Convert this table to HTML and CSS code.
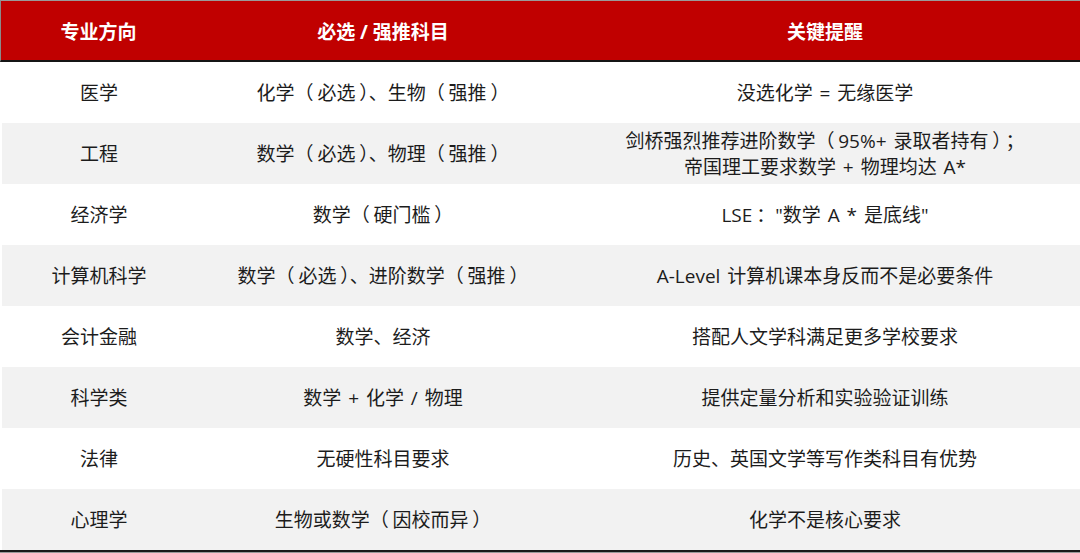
FILE: index.html
```html
<!DOCTYPE html>
<html lang="zh-CN">
<head>
<meta charset="utf-8">
<title>专业方向与选科</title>
<link rel="stylesheet" href="styles.css">
</head>
<body>
<div class="table">
  <div class="row head">
    <div class="cell">专业方向</div>
    <div class="cell">必选 / 强推科目</div>
    <div class="cell">关键提醒</div>
  </div>
  <div class="row">
    <div class="cell">医学</div>
    <div class="cell"><span>化学<span class="po">（</span>必选<span class="pc">）</span>、生物<span class="po">（</span>强推<span class="pc">）</span></span></div>
    <div class="cell">没选化学 = 无缘医学</div>
  </div>
  <div class="row alt">
    <div class="cell">工程</div>
    <div class="cell"><span>数学<span class="po">（</span>必选<span class="pc">）</span>、物理<span class="po">（</span>强推<span class="pc">）</span></span></div>
    <div class="cell"><span>剑桥强烈推荐进阶数学<span class="po">（</span>95%+ 录取者持有<span class="pc">）</span><span class="pc">；</span><br>帝国理工要求数学 + 物理均达 A*</span></div>
  </div>
  <div class="row">
    <div class="cell">经济学</div>
    <div class="cell"><span>数学<span class="po">（</span>硬门槛<span class="pc">）</span></span></div>
    <div class="cell"><span>LSE<span class="pc">：</span>"数学 A * 是底线"</span></div>
  </div>
  <div class="row alt">
    <div class="cell">计算机科学</div>
    <div class="cell"><span>数学<span class="po">（</span>必选<span class="pc">）</span>、进阶数学<span class="po">（</span>强推<span class="pc">）</span></span></div>
    <div class="cell">A-Level 计算机课本身反而不是必要条件</div>
  </div>
  <div class="row">
    <div class="cell">会计金融</div>
    <div class="cell">数学、经济</div>
    <div class="cell">搭配人文学科满足更多学校要求</div>
  </div>
  <div class="row alt">
    <div class="cell">科学类</div>
    <div class="cell">数学 + 化学 / 物理</div>
    <div class="cell">提供定量分析和实验验证训练</div>
  </div>
  <div class="row">
    <div class="cell">法律</div>
    <div class="cell">无硬性科目要求</div>
    <div class="cell">历史、英国文学等写作类科目有优势</div>
  </div>
  <div class="row alt">
    <div class="cell">心理学</div>
    <div class="cell"><span>生物或数学<span class="po">（</span>因校而异<span class="pc">）</span></span></div>
    <div class="cell">化学不是核心要求</div>
  </div>
</div>
</body>
</html>
```

FILE: styles.css
```css
html, body {
  margin: 0;
  padding: 0;
  background: #ffffff;
}

body {
  width: 1080px;
  height: 553px;
  overflow: hidden;
  font-family: "Open Sans", "Noto Sans CJK SC", sans-serif;
  font-size: 19px;
  color: #1c1c1c;
}

.table {
  display: flex;
  flex-direction: column;
  border-bottom: 2px solid #1a1a1a;
  box-shadow: 0 1px 0 #9a9a9a;
}

.row {
  display: grid;
  grid-template-columns: 194px 374px 510px;
  height: 61px;
  border-left: 2px solid #ffffff;
}

.row.alt {
  background: #f2f2f2;
}

.row.head {
  height: 59px;
  background: #c00000;
  color: #ffffff;
  font-weight: 700;
  border-top: 1px solid #9a9a9a;
  border-left: 1px solid #8a8a8a;
  border-bottom: 2px solid #151515;
  grid-template-columns: 195px 374px 510px;
}

.row.head .cell {
  padding-top: 2px;
  word-spacing: 0;
}

.cell {
  display: flex;
  align-items: center;
  justify-content: center;
  text-align: center;
  line-height: 26px;
  white-space: nowrap;
  word-spacing: 2px;
}

/* give the full-width brackets the centred look of the original face */
.po {
  padding-right: 0.2em;
}

.pc {
  padding-left: 0.2em;
}
```
